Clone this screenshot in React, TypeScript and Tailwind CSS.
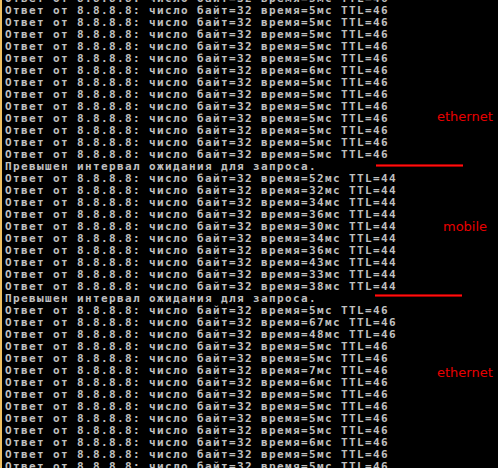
import React from "react";

const REPLY = "Ответ от 8.8.8.8: число байт=32 время=";
const TIMEOUT = "Превышен интервал ожидания для запроса.";

type Row = { t: string } | { timeout: true };

const eth1 = ["5", "5", "5", "5", "5", "5", "6", "5", "5", "5", "5", "5", "5", "5"];
const mobile = ["52", "32", "34", "36", "30", "34", "36", "43", "33", "38"];
const eth2 = ["5", "67", "48", "5", "5", "7", "6", "5", "5", "5", "5", "6", "5", "5"];

const lines: string[] = [
  ...eth1.map((t) => `${REPLY}${t}мс TTL=46`),
  TIMEOUT,
  ...mobile.map((t) => `${REPLY}${t}мс TTL=44`),
  TIMEOUT,
  ...eth2.map((t) => `${REPLY}${t}мс TTL=46`),
];

function RedLine({ className }: { className: string }) {
  return (
    <div
      className={`absolute h-[3px] bg-[#ff1010] border-y border-[#a00000] ${className}`}
    />
  );
}

function Label({ text, className }: { text: string; className: string }) {
  return (
    <div
      className={`absolute text-[13px] leading-[13px] text-[#e80000] whitespace-pre ${className}`}
      style={{ fontFamily: '"DejaVu Sans", sans-serif' }}
    >
      {text}
    </div>
  );
}

export default function App() {
  return (
    <div className="relative w-[498px] h-[468px] overflow-hidden bg-black flex">
      <div className="w-[2px] shrink-0 bg-[#efc163]" />
      <div
        className="flex flex-col pl-[3px] -mt-[7px] text-[11px] leading-[12px] font-bold tracking-[1.378px] text-[#c0c0c0] whitespace-pre"
        style={{ fontFamily: '"DejaVu Sans Mono", monospace' }}
      >
        {lines.map((l, i) => (
          <div key={i} className="h-[12px]">
            {l}
          </div>
        ))}
      </div>

      <Label text="ethernet" className="left-[437px] top-[110px]" />
      <RedLine className="left-[376px] top-[164px] w-[87px]" />
      <Label text="mobile" className="left-[443px] top-[220px]" />
      <RedLine className="left-[375px] top-[294px] w-[87px]" />
      <Label text="ethernet" className="left-[437px] top-[366px]" />
    </div>
  );
}
